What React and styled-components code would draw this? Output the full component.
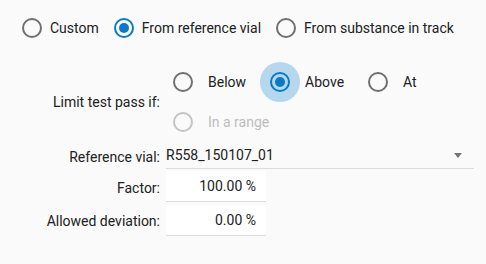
import React from 'react';
import styled, { createGlobalStyle } from 'styled-components';

const blue = '#0b79c6';

const Global = createGlobalStyle`
  html, body {
    margin: 0;
    background: #fafafa;
  }
  body {
    font-family: Roboto, "Liberation Sans", sans-serif;
    font-size: 14px;
    color: #212121;
  }
`;

const Page = styled.div`
  width: 486px;
  height: 264px;
  box-sizing: border-box;
  padding-top: 18px;
`;

// Fila superior de radios
const TopRow = styled.div`
  display: flex;
  align-items: center;
  height: 20px;
  padding-left: 22px;
`;

const TopOption = styled.label`
  display: flex;
  align-items: center;
  gap: 8px;
  margin-right: 15px;
  line-height: 20px;
`;

const Circle = styled.span`
  position: relative;
  width: 20px;
  height: 20px;
  box-sizing: border-box;
  border-radius: 50%;
  border: 2px solid ${p => (p.$disabled ? '#c4c4c4' : p.$checked ? blue : '#707070')};
  flex: none;

  &::after {
    content: '';
    display: ${p => (p.$checked ? 'block' : 'none')};
    position: absolute;
    left: 3px;
    top: 3px;
    width: 10px;
    height: 10px;
    border-radius: 50%;
    background: ${blue};
  }
`;

const Halo = styled.span`
  width: 40px;
  height: 40px;
  border-radius: 50%;
  display: flex;
  align-items: center;
  justify-content: center;
  flex: none;
  background: ${p => (p.$focus ? '#b5d8ee' : 'transparent')};
`;

// Formulario
const Form = styled.div`
  display: grid;
  grid-template-columns: 160px 1fr;
  column-gap: 6px;
  margin-top: 24px;
`;

const Label = styled.div`
  text-align: right;
  align-self: center;
  white-space: nowrap;
`;

const Group = styled.div`
  display: flex;
  flex-direction: column;
  margin-left: -3px;
`;

const GroupRow = styled.div`
  display: flex;
  align-items: center;
  height: 40px;
`;

const Option = styled.label`
  display: flex;
  align-items: center;
  margin-right: 14px;
  color: ${p => (p.$disabled ? '#bdbdbd' : 'inherit')};

  span + span {
    margin-left: 5px;
  }
`;

const Select = styled.div`
  display: flex;
  align-items: center;
  justify-content: space-between;
  width: 308px;
  height: 26px;
  border-bottom: 1px solid #dcdcdc;
  padding-right: 12px;
  box-sizing: content-box;
  width: 296px;
  margin-bottom: 2px;
`;

const Arrow = styled.span`
  width: 0;
  height: 0;
  border-left: 4px solid transparent;
  border-right: 4px solid transparent;
  border-top: 5px solid #757575;
`;

const Input = styled.div`
  width: 100px;
  height: 30px;
  box-sizing: content-box;
  background: #fff;
  border-bottom: 1px solid #dcdcdc;
  display: flex;
  align-items: center;
  justify-content: flex-end;
  padding-right: 0;
  margin-bottom: ${p => p.$gap || 0}px;

  span {
    padding-right: 10px;
  }
`;

const Radio = ({ checked, disabled, focus, children }) => (
  <Option $disabled={disabled}>
    <Halo $focus={focus}>
      <Circle $checked={checked} $disabled={disabled} />
    </Halo>
    <span>{children}</span>
  </Option>
);

const App = () => (
  <Page>
    <Global />
    <TopRow>
      <TopOption><Circle /> Custom</TopOption>
      <TopOption><Circle $checked /> From reference vial</TopOption>
      <TopOption><Circle /> From substance in track</TopOption>
    </TopRow>
    <Form>
      <Label>Limit test pass if:</Label>
      <Group>
        <GroupRow>
          <Radio>Below</Radio>
          <Radio checked focus>Above</Radio>
          <Radio>At</Radio>
        </GroupRow>
        <GroupRow>
          <Radio disabled>In a range</Radio>
        </GroupRow>
      </Group>

      <Label>Reference vial:</Label>
      <Select>
        <span>R558_150107_01</span>
        <Arrow />
      </Select>

      <Label>Factor:</Label>
      <Input $gap={3}><span>100.00 %</span></Input>

      <Label>Allowed deviation:</Label>
      <Input><span>0.00 %</span></Input>
    </Form>
  </Page>
);

export default App;
